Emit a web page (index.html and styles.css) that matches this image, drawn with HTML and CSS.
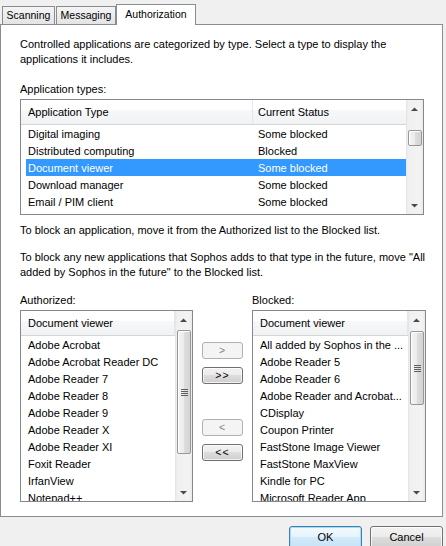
FILE: index.html
```html
<!DOCTYPE html>
<html>
<head>
<meta charset="utf-8">
<link rel="stylesheet" href="styles.css">
</head>
<body>
<div class="dialog">
  <div class="tabs">
    <div class="tab tab-scan">Scanning</div>
    <div class="tab tab-msg">Messaging</div>
    <div class="tab tab-auth active">Authorization</div>
  </div>
  <div class="panel">
    <p>Controlled applications are categorized by type. Select a type to display the<br>applications it includes.</p>
    <div class="label label-types">Application types:</div>
    <div class="listbox types">
      <div class="lv-main">
        <div class="lv-header">
          <div class="hcol hcol1">Application Type</div>
          <div class="hcol hcol2">Current Status</div>
        </div>
        <div class="lv-rows">
          <div class="trow"><span class="c1">Digital imaging</span><span class="c2">Some blocked</span></div>
          <div class="trow"><span class="c1">Distributed computing</span><span class="c2">Blocked</span></div>
          <div class="trow sel"><span class="c1">Document viewer</span><span class="c2">Some blocked</span></div>
          <div class="trow"><span class="c1">Download manager</span><span class="c2">Some blocked</span></div>
          <div class="trow"><span class="c1">Email / PIM client</span><span class="c2">Some blocked</span></div>
        </div>
      </div>
      <div class="vscroll">
        <div class="sb-arrow"><svg width="17" height="17" viewBox="0 0 17 17"><polygon points="5,11 8.5,7.5 12,11" fill="#4a4a4a"/></svg></div>
        <div class="sb-track">
          <div class="thumb thumb-types"></div>
        </div>
        <div class="sb-arrow"><svg width="17" height="17" viewBox="0 0 17 17"><polygon points="5,7 8.5,10.5 12,7" fill="#4a4a4a"/></svg></div>
      </div>
    </div>

    <p class="p-block">To block an application, move it from the Authorized list to the Blocked list.</p>
    <p class="p-future">To block any new applications that Sophos adds to that type in the future, move "All<br>added by Sophos in the future" to the Blocked list.</p>

    <div class="columns">
      <div class="col col-auth">
        <div class="label">Authorized:</div>
        <div class="listbox apps">
          <div class="lv-main">
            <div class="lv-header"><div class="hcol hsingle">Document viewer</div></div>
            <div class="lv-rows">
              <div class="arow">Adobe Acrobat</div>
              <div class="arow">Adobe Acrobat Reader DC</div>
              <div class="arow">Adobe Reader 7</div>
              <div class="arow">Adobe Reader 8</div>
              <div class="arow">Adobe Reader 9</div>
              <div class="arow">Adobe Reader X</div>
              <div class="arow">Adobe Reader XI</div>
              <div class="arow">Foxit Reader</div>
              <div class="arow">IrfanView</div>
              <div class="arow">Notepad++</div>
            </div>
          </div>
          <div class="vscroll">
            <div class="sb-arrow"><svg width="17" height="17" viewBox="0 0 17 17"><polygon points="5,11 8.5,7.5 12,11" fill="#4a4a4a"/></svg></div>
            <div class="sb-track">
              <div class="thumb thumb-auth"><span class="grip"></span></div>
            </div>
            <div class="sb-arrow"><svg width="17" height="17" viewBox="0 0 17 17"><polygon points="5,7 8.5,10.5 12,7" fill="#4a4a4a"/></svg></div>
          </div>
        </div>
      </div>

      <div class="movers">
        <div class="btn mv mv1 disabled">&gt;</div>
        <div class="btn mv mv2">&gt;&gt;</div>
        <div class="btn mv mv3 disabled">&lt;</div>
        <div class="btn mv mv4">&lt;&lt;</div>
      </div>

      <div class="col col-block">
        <div class="label">Blocked:</div>
        <div class="listbox apps">
          <div class="lv-main">
            <div class="lv-header"><div class="hcol hsingle">Document viewer</div></div>
            <div class="lv-rows">
              <div class="arow">All added by Sophos in the ...</div>
              <div class="arow">Adobe Reader 5</div>
              <div class="arow">Adobe Reader 6</div>
              <div class="arow">Adobe Reader and Acrobat...</div>
              <div class="arow">CDisplay</div>
              <div class="arow">Coupon Printer</div>
              <div class="arow">FastStone Image Viewer</div>
              <div class="arow">FastStone MaxView</div>
              <div class="arow">Kindle for PC</div>
              <div class="arow">Microsoft Reader App</div>
            </div>
          </div>
          <div class="vscroll">
            <div class="sb-arrow"><svg width="17" height="17" viewBox="0 0 17 17"><polygon points="5,11 8.5,7.5 12,11" fill="#4a4a4a"/></svg></div>
            <div class="sb-track">
              <div class="thumb thumb-block"><span class="grip"></span></div>
            </div>
            <div class="sb-arrow"><svg width="17" height="17" viewBox="0 0 17 17"><polygon points="5,7 8.5,10.5 12,7" fill="#4a4a4a"/></svg></div>
          </div>
        </div>
      </div>
    </div>
  </div>
  <div class="footer">
    <div class="btn dlg default">OK</div>
    <div class="btn dlg">Cancel</div>
  </div>
</div>
</body>
</html>
```

FILE: styles.css
```css
* { box-sizing: border-box; }
html, body { margin: 0; padding: 0; }
body {
  background: #f0f0f0;
  font-family: "Liberation Sans", Arial, sans-serif;
  font-size: 11px;
  color: #000;
}
.dialog { width: 446px; height: 546px; overflow: hidden; }

/* tabs */
.tabs { display: flex; align-items: flex-end; height: 24px; padding-left: 2px; }
.tab {
  height: 18px;
  border: 1px solid #898c95;
  border-bottom: none;
  background: linear-gradient(#f4f4f4, #e4e4e4);
  text-align: center;
  line-height: 17px;
  white-space: nowrap;
  font-size: 10.5px;
}
.tab-scan { width: 53px; margin-right: 1px; }
.tab-msg { width: 60px; }
.tab-auth { width: 80px; }
.tab.active {
  height: 21px;
  background: #fff;
  margin-bottom: -1px;
  position: relative;
  z-index: 1;
  line-height: 18px;
}

/* panel */
.panel {
  width: 443px;
  height: 493px;
  background: #fff;
  border: 1px solid #898c95;
  padding: 12px 0 0 19px;
}
p { margin: 0; line-height: 15px; white-space: nowrap; }
.label { line-height: 15px; white-space: nowrap; }
.label-types { margin-top: 15px; margin-bottom: 2px; }
.p-block { margin-top: 8px; }
.p-future { margin-top: 12px; }

/* list boxes */
.listbox {
  display: flex;
  border: 1px solid #828790;
  background: #fff;
}
.listbox.types { width: 404px; height: 116px; }
.lv-main { flex: 1; overflow: hidden; min-width: 0; }
.lv-header {
  display: flex;
  height: 25px;
  background: linear-gradient(#ffffff 0, #ffffff 40%, #f7f8f9 40%, #f1f2f4 100%);
  border-bottom: 1px solid #d5d5d5;
}
.hcol { line-height: 25px; white-space: nowrap; }
.hcol1 { width: 232px; padding-left: 7px; border-right: 1px solid #e3e8ee; }
.hcol2 { flex: 1; padding-left: 5px; }
.hsingle { flex: 1; padding-left: 7px; border-right: 1px solid #e3e8ee; }

.lv-rows { padding-left: 5px; }
.trow {
  display: grid;
  grid-template-columns: 227px 1fr;
  height: 17px;
  line-height: 18px;
  white-space: nowrap;
}
.trow .c1 { padding-left: 2px; }
.trow .c2 { padding-left: 5px; }
.trow.sel { background: #3399ff; color: #fff; }

.listbox.apps { height: 192px; }
.arow { height: 17px; line-height: 18px; padding-left: 2px; white-space: nowrap; }

/* scrollbars */
.vscroll {
  width: 17px;
  flex: none;
  display: flex;
  flex-direction: column;
  background: linear-gradient(to right, #e3e3e3 0, #f0f0f0 2px, #f3f3f3 14px, #eaeaea 17px);
}
.sb-arrow { height: 17px; flex: none; }
.sb-arrow svg { display: block; }
.sb-track { flex: 1; padding: 0 1px 0 2px; }
.thumb {
  border: 1px solid #979797;
  border-radius: 2px;
  background: linear-gradient(to right, #f4f4f4 0, #ebebeb 50%, #dedede 50%, #d4d4d4 100%);
  box-shadow: inset 1px 1px 0 #fff;
  display: flex;
  align-items: center;
  justify-content: center;
}
.thumb-types { margin-top: 13px; height: 16px; }
.thumb-auth { margin-top: 2px; height: 124px; }
.thumb-block { margin-top: 3px; height: 74px; }
.grip {
  width: 7px;
  height: 7px;
  background: repeating-linear-gradient(#5f5f5f 0, #5f5f5f 1px, transparent 1px, transparent 2px);
}

/* columns */
.columns { display: flex; margin-top: 13px; }
.col .label { margin-bottom: 2px; }
.col-auth { width: 173px; }
.col-block { width: 174px; }
.movers {
  width: 41px;
  margin: 0 9px;
  display: flex;
  flex-direction: column;
  padding-top: 49px;
}

/* buttons */
.btn {
  border: 1px solid #707070;
  border-radius: 3px;
  background: linear-gradient(#f2f2f2 0, #ebebeb 50%, #dddddd 50%, #cfcfcf 100%);
  box-shadow: inset 0 0 0 1px rgba(255,255,255,0.75);
  text-align: center;
  white-space: nowrap;
}
.btn.disabled {
  border-color: #adb2b5;
  background: #f4f4f4;
  box-shadow: none;
  color: #838383;
}
.mv { height: 17px; line-height: 15px; letter-spacing: 1px; font-size: 10.5px; }
.mv2 { margin-top: 8px; }
.mv3 { margin-top: 35px; }
.mv4 { margin-top: 8px; }

.footer {
  display: flex;
  justify-content: flex-end;
  gap: 8px;
  padding: 9px 3px 0 0;
}
.dlg { width: 73px; height: 23px; line-height: 20px; }
.btn.default {
  border-color: #3c7fb1;
  background: linear-gradient(#f2f9fd 0, #e6f3fc 50%, #d2eaf9 50%, #c6e3f6 100%);
  box-shadow: inset 0 0 0 1px #a9dbf6;
}
```
